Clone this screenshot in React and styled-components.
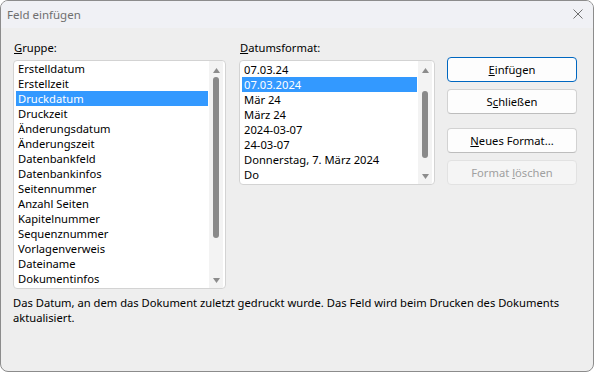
import React from "react";
import styled, {createGlobalStyle} from "styled-components";

const GlobalStyle = createGlobalStyle`
  html, body {
    margin: 0;
    padding: 0;
    background: #ffffff;
  }
  * {
    box-sizing: border-box;
  }
`;

const Dialog = styled.div`
  width: 594px;
  height: 372px;
  border: 1px solid #8c8c8c;
  border-radius: 8px;
  overflow: hidden;
  background: #eeeeee;
  font-family: "Noto Sans", "Open Sans", sans-serif;
  font-size: 11.2px;
  color: #000000;
  display: flex;
  flex-direction: column;
`;

const TitleBar = styled.div`
  height: 27px;
  flex-shrink: 0;
  background: #f0f1f5;
  display: flex;
  align-items: center;
  justify-content: space-between;
  padding: 0 10px 1px 6px;
  color: #6f6f6f;
  font-size: 11.5px;
`;

const Body = styled.div`
  padding: 12px 16px 0 12px;
  display: flex;
  flex-direction: column;
`;

const Columns = styled.div`
  display: flex;
  align-items: flex-start;
`;

const Column = styled.div`
  width: ${(p) => p.$width}px;
  margin-right: ${(p) => p.$gap || 0}px;
  display: flex;
  flex-direction: column;
`;

const Label = styled.div`
  height: 15px;
  line-height: 15px;
  padding-left: 1px;
  margin-bottom: 5px;
`;

const ListBox = styled.div`
  height: ${(p) => p.$height}px;
  background: #ffffff;
  border: 1px solid #d3d3d3;
  border-radius: 4px;
  display: flex;
  overflow: hidden;
`;

const Items = styled.div`
  flex: 1;
  padding: ${(p) => p.$top}px 1px 0 2px;
  display: flex;
  flex-direction: column;
`;

const Item = styled.div`
  height: 15px;
  line-height: 15px;
  padding-left: 2px;
  white-space: nowrap;
  background: ${(p) => (p.$selected ? "#3399ff" : "transparent")};
  color: ${(p) => (p.$selected ? "#ffffff" : "#000000")};
`;

const ScrollTrack = styled.div`
  width: 14px;
  margin: 0 2px 0 0;
  background: #f3f3f3;
  display: flex;
  flex-direction: column;
  align-items: center;
  padding: 7px 0 5px;
`;

const Arrow = styled.svg`
  width: 7px;
  height: 5px;
  flex-shrink: 0;
  fill: #8c8c8c;
`;

const Thumb = styled.div`
  width: 6px;
  height: ${(p) => p.$height}px;
  margin-top: ${(p) => p.$offset}px;
  border-radius: 3px;
  background: #8a8a8a;
  flex-shrink: 0;
`;

const Filler = styled.div`
  flex: 1;
`;

const Buttons = styled.div`
  width: 130px;
  margin-top: 17px;
  display: flex;
  flex-direction: column;
`;

const Button = styled.div`
  height: 25px;
  margin-top: ${(p) => p.$space || 0}px;
  border: 1px solid ${(p) => (p.$default ? "#0067c0" : p.$disabled ? "#e2e2e2" : "#d2d2d2")};
  border-bottom-color: ${(p) => (p.$default ? "#0067c0" : p.$disabled ? "#e2e2e2" : "#bdbdbd")};
  border-radius: 4px;
  background: ${(p) => (p.$disabled ? "#f5f5f5" : "#fdfdfd")};
  color: ${(p) => (p.$disabled ? "#a0a0a0" : "#000000")};
  display: flex;
  align-items: center;
  justify-content: center;
  padding-bottom: 1px;
`;

const Description = styled.div`
  margin-top: 6px;
  line-height: 15px;
`;

const CloseIcon = () => (
  <svg width="10" height="10" viewBox="0 0 10 10">
    <path d="M0.5 0.5 L9.5 9.5 M9.5 0.5 L0.5 9.5" stroke="#6f6f6f" strokeWidth="1" fill="none" />
  </svg>
);

const Scrollbar = ({thumbOffset, thumbHeight}) => (
  <ScrollTrack>
    <Arrow viewBox="0 0 7 5">
      <polygon points="3.5,0 7,5 0,5" />
    </Arrow>
    <Thumb $offset={thumbOffset} $height={thumbHeight} />
    <Filler />
    <Arrow viewBox="0 0 7 5">
      <polygon points="0,0 7,0 3.5,5" />
    </Arrow>
  </ScrollTrack>
);

const groups = [
  "Erstelldatum",
  "Erstellzeit",
  "Druckdatum",
  "Druckzeit",
  "Änderungsdatum",
  "Änderungszeit",
  "Datenbankfeld",
  "Datenbankinfos",
  "Seitennummer",
  "Anzahl Seiten",
  "Kapitelnummer",
  "Sequenznummer",
  "Vorlagenverweis",
  "Dateiname",
  "Dokumentinfos",
];

const formats = [
  "07.03.24",
  "07.03.2024",
  "Mär 24",
  "März 24",
  "2024-03-07",
  "24-03-07",
  "Donnerstag, 7. März 2024",
  "Do",
];

const App = () => {
  return (
    <>
      <GlobalStyle />
      <Dialog>
        <TitleBar>
          <span>Feld einfügen</span>
          <CloseIcon />
        </TitleBar>
        <Body>
          <Columns>
            <Column $width={213} $gap={13}>
              <Label>
                <u>G</u>ruppe:
              </Label>
              <ListBox $height={229}>
                <Items $top={0}>
                  {groups.map((g) => (
                    <Item key={g} $selected={g === "Druckdatum"}>
                      {g}
                    </Item>
                  ))}
                </Items>
                <Scrollbar thumbOffset={4} thumbHeight={161} />
              </ListBox>
            </Column>
            <Column $width={196} $gap={12}>
              <Label>
                <u>D</u>atumsformat:
              </Label>
              <ListBox $height={125}>
                <Items $top={1}>
                  {formats.map((f) => (
                    <Item key={f} $selected={f === "07.03.2024"}>
                      {f}
                    </Item>
                  ))}
                </Items>
                <Scrollbar thumbOffset={18} thumbHeight={67} />
              </ListBox>
            </Column>
            <Buttons>
              <Button $default>
                <span>
                  <u>E</u>infügen
                </span>
              </Button>
              <Button $space={7}>
                <span>
                  S<u>c</u>hließen
                </span>
              </Button>
              <Button $space={14}>
                <span>
                  <u>N</u>eues Format...
                </span>
              </Button>
              <Button $space={7} $disabled>
                <span>
                  Format <u>l</u>öschen
                </span>
              </Button>
            </Buttons>
          </Columns>
          <Description>
            Das Datum, an dem das Dokument zuletzt gedruckt wurde. Das Feld wird beim Drucken des Dokuments
            <br />
            aktualisiert.
          </Description>
        </Body>
      </Dialog>
    </>
  );
};

export default App;
